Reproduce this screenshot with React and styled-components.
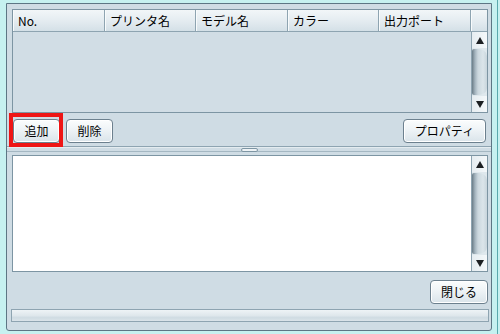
import React from "react";
import styled, { createGlobalStyle } from "styled-components";

const GlobalStyle = createGlobalStyle`
  html, body { margin: 0; padding: 0; }
  body {
    background: #c6f1f0;
    font-family: "Noto Sans CJK JP", "DejaVu Sans", sans-serif;
    font-size: 12px;
    color: #000;
  }
`;

const columns = [
  { label: "No.", width: 92 },
  { label: "プリンタ名", width: 91 },
  { label: "モデル名", width: 92 },
  { label: "カラー", width: 91 },
  { label: "出力ポート", width: 92 },
];

const App = () => {
  return (
    <>
      <GlobalStyle />
      <Window>
        <Panel>
          <Table>
            <HeaderRow>
              {columns.map((c) => (
                <HeaderCell key={c.label} $w={c.width}>
                  {c.label}
                </HeaderCell>
              ))}
              <HeaderCorner />
            </HeaderRow>
            <TableBody>
              <EmptyRows />
              <ScrollBar />
            </TableBody>
          </Table>

          <ButtonRow>
            <Highlight>
              <Button $w={47}>追加</Button>
            </Highlight>
            <Button $w={47}>削除</Button>
            <Spacer />
            <Button $w={83} $mr={2}>プロパティ</Button>
          </ButtonRow>

          <Splitter>
            <Grip />
          </Splitter>

          <TextArea>
            <TextContent />
            <ScrollBar />
          </TextArea>

          <Footer>
            <Button $w={58}>閉じる</Button>
          </Footer>

          <StatusBar />
        </Panel>
      </Window>
    </>
  );
};

const ScrollBar = () => (
  <Track>
    <Arrow>
      <UpTri />
    </Arrow>
    <Thumb />
    <Arrow>
      <DownTri />
    </Arrow>
  </Track>
);

export default App;

// styles

const Window = styled.div`
  width: 500px;
  height: 334px;
  box-sizing: border-box;
  padding: 3px 8px 3px 6px;
  background: linear-gradient(to left, #c6f1f0 0 2px, #5aa9ad 2px 3px, #c6f1f0 3px);
`;

const Panel = styled.div`
  height: 100%;
  box-sizing: border-box;
  border: 1px solid #5d7684;
  border-radius: 0 0 3px 3px;
  background: #cfdce4;
  padding: 5px 3px 0 5px;
  display: flex;
  flex-direction: column;
`;

const Table = styled.div`
  height: 104px;
  box-sizing: border-box;
  border: 1px solid #7d95a3;
  display: flex;
  flex-direction: column;
`;

const HeaderRow = styled.div`
  display: flex;
  height: 21px;
  border-bottom: 1px solid #8ea4b1;
  background: linear-gradient(#f2f6f8, #e3ebf0 55%, #d4e0e7);
`;

const HeaderCell = styled.div`
  width: ${(p) => p.$w}px;
  box-sizing: border-box;
  padding-left: 5px;
  border-right: 1px solid #8ea4b1;
  box-shadow: inset 1px 0 0 #f8fbfc;
  line-height: 21px;
  white-space: nowrap;
`;

const HeaderCorner = styled.div`
  flex: 1;
  box-shadow: inset 1px 0 0 #f8fbfc;
`;

const TableBody = styled.div`
  flex: 1;
  display: flex;
  background: #d1dde5;
`;

const EmptyRows = styled.div`
  flex: 1;
`;

const Track = styled.div`
  width: 16px;
  box-sizing: border-box;
  border-left: 1px solid #8ea4b1;
  background: #dfe8ed;
  display: flex;
  flex-direction: column;
`;

const Arrow = styled.div`
  height: 16px;
  flex: none;
  display: flex;
  align-items: center;
  justify-content: center;
  background: linear-gradient(to right, #e6edf1, #f4f8fa);
`;

const UpTri = styled.div`
  width: 0;
  height: 0;
  border-left: 4px solid transparent;
  border-right: 4px solid transparent;
  border-bottom: 7px solid #1c1f22;
`;

const DownTri = styled.div`
  width: 0;
  height: 0;
  border-left: 4px solid transparent;
  border-right: 4px solid transparent;
  border-top: 7px solid #1c1f22;
`;

const Thumb = styled.div`
  flex: 1;
  margin: 1px 0;
  border-radius: 2px 9px 9px 2px / 2px 7px 7px 2px;
  background: linear-gradient(
    to right,
    #6a7c87 0,
    #a3b3bd 3px,
    #cbd7de 6px,
    #dbe5ea 11px,
    #c8d5dc 15px
  );
`;

const ButtonRow = styled.div`
  height: 33px;
  box-sizing: border-box;
  padding: 6px 0 0 1px;
  display: flex;
  align-items: flex-start;
  gap: 6px;
`;

const Spacer = styled.div`
  flex: 1;
`;

const Highlight = styled.div`
  position: relative;
  display: flex;

  &::after {
    content: "";
    position: absolute;
    inset: -6px -3px -4px -4px;
    border: 4px solid #ee1515;
    pointer-events: none;
  }
`;

const Button = styled.button`
  width: ${(p) => p.$w}px;
  height: 24px;
  margin-right: ${(p) => p.$mr || 0}px;
  padding: 0;
  border: 1px solid #6c808e;
  border-radius: 4px;
  background: linear-gradient(#fbfdfd, #eef3f6 45%, #dae4ea);
  box-shadow: inset 0 0 0 1px #ffffff;
  font-family: "Noto Sans CJK JP", "DejaVu Sans", sans-serif;
  font-size: 12px;
  color: #000;
  line-height: 22px;
`;

const Splitter = styled.div`
  height: 9px;
  margin: 0 -3px 0 -5px;
  box-sizing: border-box;
  border-top: 1px solid #8ea4b1;
  box-shadow: inset 0 1px 0 #e4ecf0, inset 0 -3px 0 #cfdce4, inset 0 -4px 0 #a4b7c2;
  display: flex;
  justify-content: center;
  padding-top: 1px;
`;

const Grip = styled.div`
  width: 17px;
  height: 4px;
  box-sizing: border-box;
  border: 1px solid #7d95a3;
  border-radius: 2px;
  background: #eef3f6;
`;

const TextArea = styled.div`
  height: 117px;
  box-sizing: border-box;
  border: 1px solid #7d95a3;
  display: flex;
  background: #fff;
`;

const TextContent = styled.div`
  flex: 1;
`;

const Footer = styled.div`
  height: 37px;
  box-sizing: border-box;
  padding-top: 8px;
  display: flex;
  justify-content: flex-end;
  align-items: flex-start;
`;

const StatusBar = styled.div`
  height: 13px;
  margin: 0 -1px;
  box-sizing: border-box;
  border: 1px solid #8ea4b1;
  background: linear-gradient(#eef3f6, #dfe7ec 50%, #cfdbe2 70%, #dbe4ea);
`;
